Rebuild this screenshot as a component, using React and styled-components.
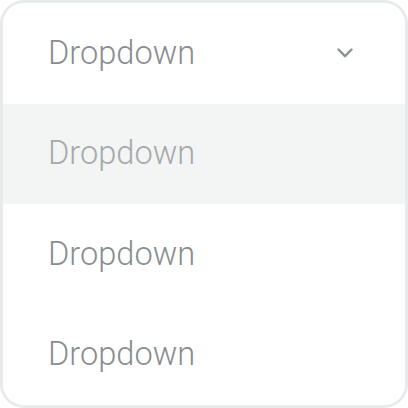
import React from "react";
import styled, { createGlobalStyle } from "styled-components";

const GlobalStyle = createGlobalStyle`
  html, body {
    margin: 0;
    padding: 0;
    background: #ffffff;
  }
  * {
    box-sizing: border-box;
  }
`;

const Card = styled.div`
  width: 408px;
  height: 408px;
  border: 3px solid #e8ebec;
  border-radius: 24px;
  overflow: hidden;
  background: #ffffff;
  display: flex;
  flex-direction: column;
  font-family: Roboto, "Liberation Sans", sans-serif;
`;

const Row = styled.div`
  flex: 1;
  display: flex;
  align-items: center;
  justify-content: space-between;
  padding: 0 52px 0 45px;
  background: ${(p) => (p.$active ? "#f3f5f5" : "#ffffff")};
  color: ${(p) => (p.$active ? "#a6a9ac" : "#8a8d90")};
  font-size: 32.6px;
  font-weight: 300;
  cursor: pointer;
`;

const Label = styled.span`
  line-height: 1;
`;

const Chevron = () => (
  <svg width="16" height="10" viewBox="0 0 16 10" fill="none">
    <path
      d="M1.5 1.5L8 8.2L14.5 1.5"
      stroke="#8e9194"
      strokeWidth="2.4"
      strokeLinecap="round"
      strokeLinejoin="round"
    />
  </svg>
);

const items = ["Dropdown", "Dropdown", "Dropdown"];

export default function App() {
  return (
    <>
      <GlobalStyle />
      <Card>
        <Row>
          <Label>Dropdown</Label>
          <Chevron />
        </Row>
        {items.map((item, i) => (
          <Row key={i} $active={i === 0}>
            <Label>{item}</Label>
          </Row>
        ))}
      </Card>
    </>
  );
}
